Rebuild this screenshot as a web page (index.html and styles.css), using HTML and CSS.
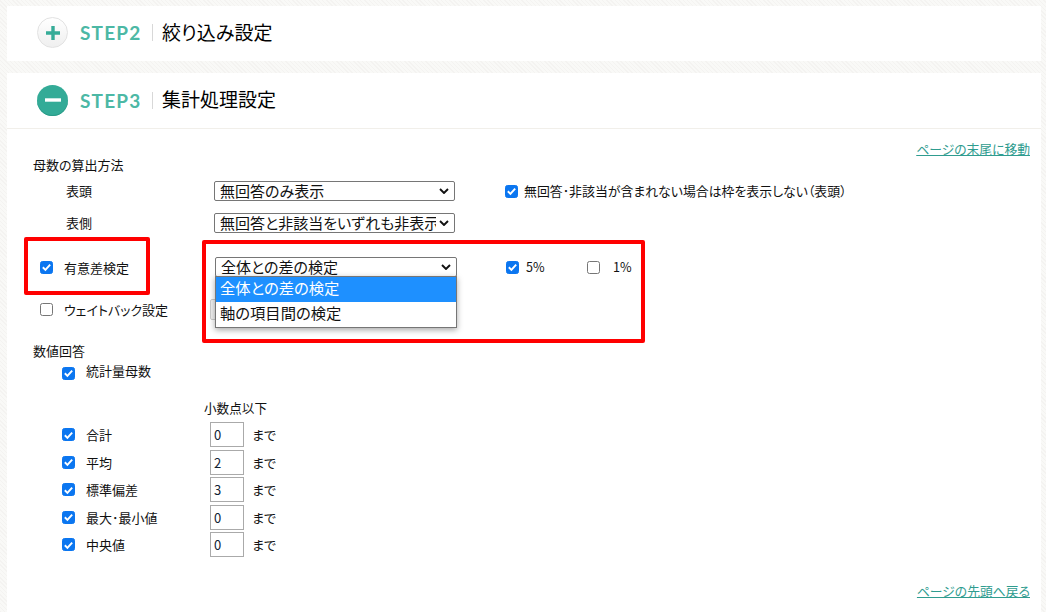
FILE: index.html
```html
<!DOCTYPE html>
<html lang="ja">
<head>
<meta charset="utf-8">
<title>集計処理設定</title>
<link rel="stylesheet" href="styles.css">
</head>
<body>
<section class="panel panel-closed">
  <header class="panel-head">
    <span class="toggle toggle-plus"><svg viewBox="0 0 16 16" width="16" height="16"><path d="M8 1v14M1 8h14" stroke="#36ac98" stroke-width="3.4" fill="none"/></svg></span>
    <span class="step">STEP2</span>
    <h2 class="title">絞り込み設定</h2>
  </header>
</section>
<section class="panel panel-open">
  <header class="panel-head panel-head-line">
    <span class="toggle toggle-minus"><svg viewBox="0 0 16 16" width="16" height="16"><path d="M0 8h16" stroke="#fff" stroke-width="3.4" fill="none"/></svg></span>
    <span class="step">STEP3</span>
    <h2 class="title title-wide">集計処理設定</h2>
  </header>
  <div class="body">
    <div class="link-row"><a class="link" href="#end">ページの末尾に移動</a></div>
    <p class="group-label">母数の算出方法</p>
    <div class="row row-head">
      <span class="row-name">表頭</span>
      <span class="select sel-a"><span class="sel-text">無回答のみ表示</span><svg class="chev" viewBox="0 0 10 6" width="10" height="6"><path d="M1 1l4 4 4-4" stroke="#111" stroke-width="1.9" fill="none"/></svg></span>
      <label class="check-text"><span class="cb on"><svg viewBox="0 0 12 12" width="12" height="12"><path d="M2 6.3l2.8 2.8L10 3.3" stroke="#fff" stroke-width="2.1" fill="none"/></svg></span>無回答･非該当が含まれない場合は枠を表示しない（表頭）</label>
    </div>
    <div class="row row-side">
      <span class="row-name">表側</span>
      <span class="select sel-a"><span class="sel-text">無回答と非該当をいずれも非表示</span><svg class="chev" viewBox="0 0 10 6" width="10" height="6"><path d="M1 1l4 4 4-4" stroke="#111" stroke-width="1.9" fill="none"/></svg></span>
    </div>
    <div class="row row-sig">
      <label class="main-check"><span class="cb on"><svg viewBox="0 0 12 12" width="12" height="12"><path d="M2 6.3l2.8 2.8L10 3.3" stroke="#fff" stroke-width="2.1" fill="none"/></svg></span>有意差検定</label>
      <span class="select-wrap">
        <span class="select sel-b"><span class="sel-text">全体との差の検定</span><svg class="chev" viewBox="0 0 10 6" width="10" height="6"><path d="M1 1l4 4 4-4" stroke="#111" stroke-width="1.9" fill="none"/></svg></span>
        <span class="menu">
          <span class="opt opt-sel">全体との差の検定</span>
          <span class="opt">軸の項目間の検定</span>
        </span>
      </span>
      <label class="pct pct-5"><span class="cb on"><svg viewBox="0 0 12 12" width="12" height="12"><path d="M2 6.3l2.8 2.8L10 3.3" stroke="#fff" stroke-width="2.1" fill="none"/></svg></span>5%</label>
      <label class="pct"><span class="cb"></span>1%</label>
    </div>
    <div class="row row-wb">
      <label class="main-check wb-check"><span class="cb"></span>ウェイトバック設定</label>
      <span class="wb-button"></span>
    </div>
    <p class="group-label group-num">数値回答</p>
    <label class="stat-check"><span class="cb on"><svg viewBox="0 0 12 12" width="12" height="12"><path d="M2 6.3l2.8 2.8L10 3.3" stroke="#fff" stroke-width="2.1" fill="none"/></svg></span>統計量母数</label>
    <p class="decimal-label">小数点以下</p>
    <div class="num-table">
      <label class="stat"><span class="cb on"><svg viewBox="0 0 12 12" width="12" height="12"><path d="M2 6.3l2.8 2.8L10 3.3" stroke="#fff" stroke-width="2.1" fill="none"/></svg></span>合計</label><span class="num">0</span><span class="until">まで</span>
      <label class="stat"><span class="cb on"><svg viewBox="0 0 12 12" width="12" height="12"><path d="M2 6.3l2.8 2.8L10 3.3" stroke="#fff" stroke-width="2.1" fill="none"/></svg></span>平均</label><span class="num">2</span><span class="until">まで</span>
      <label class="stat"><span class="cb on"><svg viewBox="0 0 12 12" width="12" height="12"><path d="M2 6.3l2.8 2.8L10 3.3" stroke="#fff" stroke-width="2.1" fill="none"/></svg></span>標準偏差</label><span class="num">3</span><span class="until">まで</span>
      <label class="stat"><span class="cb on"><svg viewBox="0 0 12 12" width="12" height="12"><path d="M2 6.3l2.8 2.8L10 3.3" stroke="#fff" stroke-width="2.1" fill="none"/></svg></span>最大･最小値</label><span class="num">0</span><span class="until">まで</span>
      <label class="stat"><span class="cb on"><svg viewBox="0 0 12 12" width="12" height="12"><path d="M2 6.3l2.8 2.8L10 3.3" stroke="#fff" stroke-width="2.1" fill="none"/></svg></span>中央値</label><span class="num">0</span><span class="until">まで</span>
    </div>
    <div class="link-row link-bottom"><a class="link" href="#top">ページの先頭へ戻る</a></div>
  </div>
  <span class="mark mark-a"></span>
  <span class="mark mark-b"></span>
</section>
</body>
</html>
```
FILE: styles.css
```css
* { box-sizing: border-box; }
html, body { height: 612px; overflow: hidden; }
body {
  margin: 0;
  padding: 6px 5px 0 7px;
  background: repeating-linear-gradient(45deg, #f4f3f1 0 1px, #f9f9f7 1px 3px);
  color: #111;
  font: 13px/1 "Noto Sans CJK JP", "Noto Sans", sans-serif;
  font-feature-settings: "palt";
}
p, h2 { margin: 0; font-weight: 400; }
.panel { background: #fff; position: relative; }
.panel-closed { height: 55px; margin-bottom: 12px; }
.panel-open { height: 540px; }
.panel-head { display: flex; align-items: center; height: 55px; padding: 0 0 2px 30px; }
.panel-head-line { height: 56px; padding-bottom: 1px; border-bottom: 1px solid #f1efea; }
.toggle { width: 31px; height: 31px; border-radius: 50%; display: flex; align-items: center; justify-content: center; flex: none; }
.toggle-plus { background: linear-gradient(#fff, #efefef); border: 1px solid #e2e2e2; }
.toggle-minus { background: #33ab97; box-shadow: inset 0 -1px 0 #2a9a87; }
.step { font: 700 19px/1 Lato, sans-serif; letter-spacing: 1.2px; color: #4cb8a5; margin-left: 12px; width: 73px; height: 17px; border-right: 1px solid #d8d8d8; display: flex; align-items: center; }
.title { font-size: 19px; line-height: 24px; color: #000; margin: 0 0 2px 9px; }
.body { padding: 13px 11px 0 26px; }
.link-row { display: flex; justify-content: flex-end; }
.link { color: #2f9c8f; font-size: 12.8px; line-height: 14px; text-decoration: underline; }
.group-label { font-size: 13px; line-height: 16px; margin-top: 1px; }
.row { display: flex; align-items: center; }
.row-name { width: 181px; padding: 0 0 2px 33px; flex: none; }
.row-head { margin-top: 8px; height: 20px; }
.row-side { margin-top: 12px; height: 20px; }
.select { display: flex; align-items: center; justify-content: space-between; width: 241px; height: 20px; border: 1px solid #767676; border-radius: 2px; background: #fff; padding: 0 5px; font-size: 15px; color: #111; flex: none; white-space: nowrap; }
.sel-text { overflow: hidden; width: 216px; line-height: 22px; }
.chev { flex: none; }
.check-text { display: flex; align-items: center; gap: 6px; margin-left: 50px; font-size: 12.9px; }
.cb { width: 13px; height: 13px; border: 1px solid #767676; border-radius: 2.5px; background: #fff; display: inline-flex; align-items: center; justify-content: center; flex: none; }
.cb.on { background: #0b76f0; border-color: #0b76f0; }
.row-sig { margin-top: 24px; height: 20px; }
.main-check { display: flex; align-items: center; gap: 11px; width: 182px; padding-left: 7px; flex: none; }
.wb-check { width: 177px; }
.select-wrap { position: relative; display: block; flex: none; width: 242px; height: 20px; }
.sel-b { width: 242px; }
.menu { position: absolute; left: 0; top: 19px; width: 242px; padding-bottom: 1px; background: #fff; border: 1px solid #767676; box-shadow: 0 2px 6px rgba(0,0,0,.35); display: flex; flex-direction: column; z-index: 2; }
.opt { display: block; height: 24px; line-height: 21px; padding-left: 4px; font-size: 15.3px; color: #111; }
.opt-sel { background: #1e90ff; color: #fff; height: 25px; }
.pct { display: flex; align-items: center; gap: 7px; width: 81px; font-size: 12.6px; }
.pct-5 { margin-left: 49px; }
.pct:last-child { gap: 13px; }
.row-wb { margin-top: 23px; height: 18px; }
.wb-button { width: 120px; height: 21px; flex: none; border: 1px solid #ccc; border-radius: 2px; background: #f0f0f0; }
.group-num { margin-top: 25px; }
.stat-check { display: flex; align-items: center; gap: 11px; margin: 1px 0 0 29px; height: 20px; }
.stat-check .cb { position: relative; top: 3px; }
.decimal-label { margin: 20px 0 0 171px; line-height: 16px; font-size: 12.6px; }
.num-table { display: grid; grid-template-columns: 148px 34px auto; grid-auto-rows: 27.5px; align-items: center; margin: 5px 0 0 29px; justify-content: start; }
.stat { display: flex; align-items: center; gap: 11px; }
.num { width: 34px; height: 25px; border: 1px solid #aaa; line-height: 23px; padding-left: 3px; color: #123; font-size: 13px; }
.until { margin-left: 8px; }
.link-bottom { margin-top: 25px; }
.mark { position: absolute; border: 4px solid #f00; border-radius: 2px; pointer-events: none; z-index: 3; }
.mark-a { left: 17px; top: 164px; width: 126px; height: 58px; }
.mark-b { left: 195px; top: 167px; width: 443px; height: 103px; }
```
